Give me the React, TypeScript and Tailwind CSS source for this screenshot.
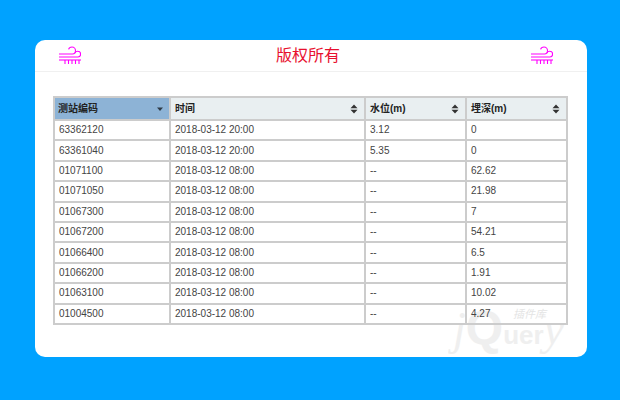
import React from "react";

const rows = [
  ["63362120", "2018-03-12 20:00", "3.12", "0"],
  ["63361040", "2018-03-12 20:00", "5.35", "0"],
  ["01071100", "2018-03-12 08:00", "--", "62.62"],
  ["01071050", "2018-03-12 08:00", "--", "21.98"],
  ["01067300", "2018-03-12 08:00", "--", "7"],
  ["01067200", "2018-03-12 08:00", "--", "54.21"],
  ["01066400", "2018-03-12 08:00", "--", "6.5"],
  ["01066200", "2018-03-12 08:00", "--", "1.91"],
  ["01063100", "2018-03-12 08:00", "--", "10.02"],
  ["01004500", "2018-03-12 08:00", "--", "4.27"],
];

function WindIcon() {
  return (
    <svg width="22" height="19" viewBox="0 0 22 19" fill="none" stroke="#f0f" strokeWidth="1.1">
      <path d="M0 8h13.5c1.8 0 3-1.4 3-3.4S15 1 13 1c-1.7 0-3 .9-3.4 2.4" />
      <path d="M0 11h19c1.6 0 2.6-1.3 2.6-2.9 0-1.7-1.2-2.9-2.9-2.9-1.3 0-2.3.7-2.7 1.8" />
      <path d="M0 14h22" />
      <path d="M6 14v4M9.5 14v4M13 14v4M16.5 14v4M20 14v4" />
    </svg>
  );
}

function SortIcon({ active }: { active?: boolean }) {
  if (active) {
    return (
      <svg width="8" height="8" viewBox="0 0 8 8" fill="#2f3b47">
        <path d="M1 2.5h6L4 6z" />
      </svg>
    );
  }
  return (
    <svg width="8" height="10" viewBox="0 0 8 10" fill="#333">
      <path d="M4 0.5L7.5 4.3H.5zM4 9.5L.5 5.7h7z" />
    </svg>
  );
}

function Th({ label, width, active }: { label: string; width: string; active?: boolean }) {
  return (
    <th className={`${width} border-2 border-[#ccc] p-0 text-left font-bold ${active ? "bg-[#8db3d6]" : "bg-[#e9eff1]"}`}>
      <div className={`flex h-[21px] items-center justify-between text-[10px] text-[#222] ${active ? "pl-[3px] pr-[5px]" : "pl-[4px] pr-[6px]"}`}>
        <span>{label}</span>
        <SortIcon active={active} />
      </div>
    </th>
  );
}

export default function App() {
  return (
    <div className="h-[400px] w-[620px] overflow-hidden bg-[#00a2ff] px-[35px] pt-[40px] font-['Liberation_Sans','Noto_Sans_CJK_SC',sans-serif]">
      <div className="relative h-[317px] w-[552px] rounded-[10px] bg-white">
        <div className="flex h-[32px] items-center justify-between border-b border-[#f0f0f0] pl-[24px] pr-[34px]">
          <WindIcon />
          <div className="pl-[4px] text-[16px] text-[#e8102e]">版权所有</div>
          <WindIcon />
        </div>
        <div className="relative z-10 px-[18px] pt-[24px]">
          <table className="w-[513px] table-fixed border-collapse border-2 border-[#ccc] text-[10px] text-[#444]">
            <thead>
              <tr>
                <Th label="测站编码" width="w-[116px]" active />
                <Th label="时间" width="w-[195px]" />
                <Th label="水位(m)" width="w-[101px]" />
                <Th label="埋深(m)" width="w-[101px]" />
              </tr>
            </thead>
            <tbody>
              {rows.map((row) => (
                <tr key={row[0]}>
                  {row.map((cell, i) => (
                    <td key={i} className="h-[20.4px] border-2 border-[#ccc] px-[4px] py-0 leading-none">
                      {cell}
                    </td>
                  ))}
                </tr>
              ))}
            </tbody>
          </table>
        </div>
        <div className="absolute left-[418px] top-[264px] text-[#ececec] opacity-80">
          <span className="font-['Liberation_Serif',serif] text-[46px] leading-none italic">j</span>
          <span className="text-[48px] leading-none font-bold">Q</span>
          <span className="text-[26px] leading-none font-bold">uer</span>
          <span className="font-['Liberation_Serif',serif] text-[46px] leading-none italic">y</span>
          <span className="absolute left-[60px] top-[2px] text-[11px] italic text-[#dedede]">插件库</span>
        </div>
      </div>
    </div>
  );
}
